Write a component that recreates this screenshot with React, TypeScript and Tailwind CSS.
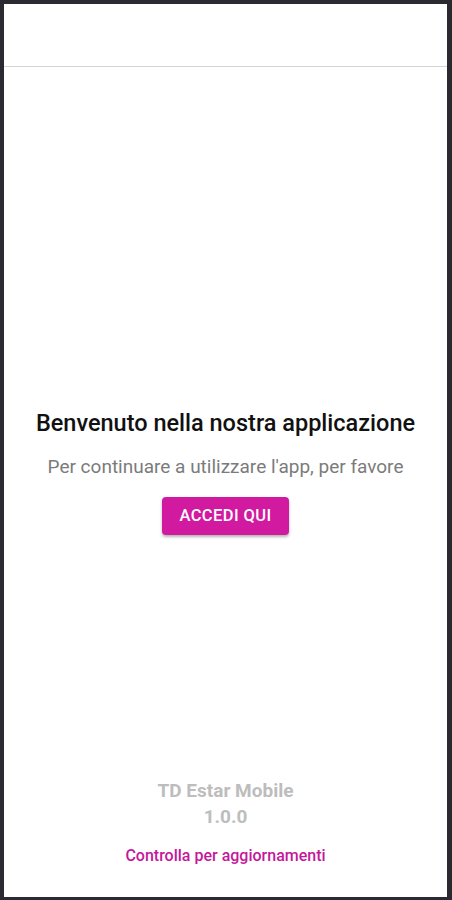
export default function App() {
  return (
    <div
      className="w-[452px] h-[900px] bg-[#2a2a30] pt-[4px] pl-[4px] pr-[5px] pb-[3px]"
      style={{ fontFamily: 'Roboto, "Noto Sans", sans-serif' }}
    >
      <div className="h-full bg-white flex flex-col">
        <header className="h-[63px] shrink-0 border-b border-[#d4d4d4]" />

        <main className="flex flex-col items-center pt-[341px]">
          <h1 className="text-[23.5px] leading-[30px] font-medium text-[#111111]">
            Benvenuto nella nostra applicazione
          </h1>
          <p className="mt-[16px] text-[19px] leading-[26px] text-[#7b7b7b]">
            Per continuare a utilizzare l'app, per favore
          </p>
          <button className="mt-[17px] h-[38px] px-[17px] rounded-[4px] bg-[#d21aa0] text-white text-[16.5px] font-medium tracking-[0.4px] uppercase shadow-[0_2px_3px_rgba(0,0,0,0.3)]">
            Accedi qui
          </button>
        </main>

        <footer className="mt-auto flex flex-col items-center pb-[31px]">
          <div className="text-[19px] leading-[26px] font-bold text-[#bdbdbd]">TD Estar Mobile</div>
          <div className="text-[19px] leading-[26px] font-bold text-[#bdbdbd]">1.0.0</div>
          <button className="mt-[16px] text-[16px] leading-[20px] font-medium text-[#c4189b]">
            Controlla per aggiornamenti
          </button>
        </footer>
      </div>
    </div>
  )
}
